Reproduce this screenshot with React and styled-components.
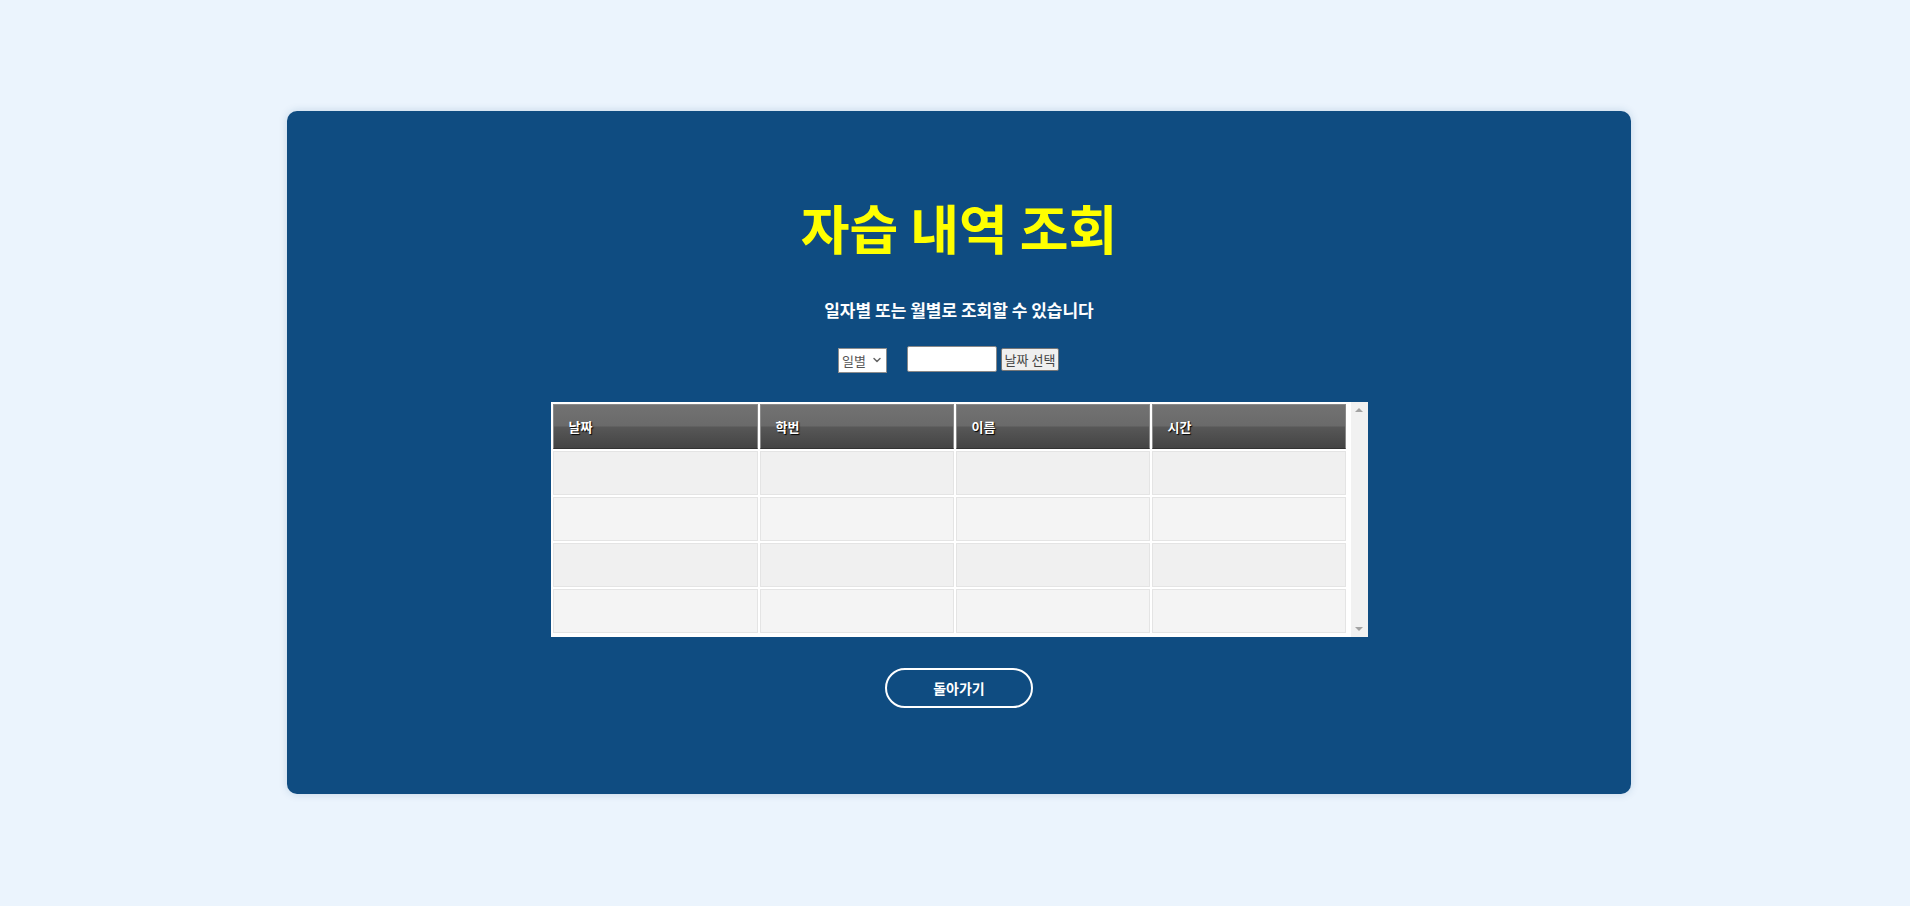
import React from "react";
import styled, { createGlobalStyle } from "styled-components";
import { ChevronDown } from "lucide-react";

const rows = [0, 1, 2, 3];
const columns = ["날짜", "학번", "이름", "시간"];

/**
 * StudyHistory page.
 */
function App() {
  return (
    <>
      <GlobalStyle />
      <Page>
        <Card>
          {/** Title */}
          <Title>자습 내역 조회</Title>
          <Subtitle>일자별 또는 월별로 조회할 수 있습니다</Subtitle>
          {/** Filter controls */}
          <Controls>
            <SelectWrap>
              <Select defaultValue="day">
                <option value="day">일별</option>
                <option value="month">월별</option>
              </Select>
              <Chevron size={12} strokeWidth={3} />
            </SelectWrap>
            <DateInput type="text" />
            <PickButton type="button">날짜 선택</PickButton>
          </Controls>
          {/** Result table */}
          <TableBox>
            <TableScroll>
              <Table>
                <thead>
                  <tr>
                    {columns.map(col => (
                      <HeadCell key={col}>{col}</HeadCell>
                    ))}
                  </tr>
                </thead>
                <tbody>
                  {rows.map(r => (
                    <tr key={r}>
                      {columns.map(col => (
                        <Cell key={col} odd={r % 2 === 0} />
                      ))}
                    </tr>
                  ))}
                </tbody>
              </Table>
            </TableScroll>
            <Scrollbar>
              <Arrow />
              <Arrow down />
            </Scrollbar>
          </TableBox>
          <BackButton type="button">돌아가기</BackButton>
        </Card>
      </Page>
    </>
  );
}

const GlobalStyle = createGlobalStyle`
  html, body {
    margin: 0;
    padding: 0;
    background: #ebf4fd;
    font-family: "Noto Sans CJK KR", "Noto Sans", sans-serif;
  }
`;
const Page = styled.div`
  display: flex;
  justify-content: center;
  padding: 111px 0 0 8px;
  min-height: 906px;
  box-sizing: border-box;
`;
const Card = styled.div`
  width: 1344px;
  height: 683px;
  box-sizing: border-box;
  background: #0f4c81;
  border-radius: 10px;
  box-shadow: 0 0 8px rgba(15, 76, 129, 0.18);
  display: flex;
  flex-direction: column;
  align-items: center;
  padding-top: 84px;
`;
const Title = styled.h1`
  margin: 0;
  color: #ffff00;
  font-size: 53px;
  line-height: 64px;
  font-weight: 700;
`;
const Subtitle = styled.p`
  margin: 39px 0 0;
  color: #ffffff;
  font-size: 17px;
  line-height: 24px;
  font-weight: 700;
`;
const Controls = styled.div`
  display: flex;
  align-items: center;
  margin: 24px 21px 0 0;
  height: 26px;
`;
const SelectWrap = styled.div`
  position: relative;
  width: 49px;
  height: 25px;
`;
const Select = styled.select`
  appearance: none;
  width: 100%;
  height: 100%;
  box-sizing: border-box;
  font-family: "Noto Sans CJK KR", sans-serif;
  font-size: 13px;
  color: #555;
  background: #fff;
  border: 1px solid #8d8d8d;
  border-radius: 0;
  padding: 0 0 0 3px;
`;
const Chevron = styled(ChevronDown)`
  position: absolute;
  right: 4px;
  top: 7px;
  color: #666;
  pointer-events: none;
`;
const DateInput = styled.input`
  width: 90px;
  height: 26px;
  box-sizing: border-box;
  margin-left: 20px;
  border: 1px solid #888;
  border-radius: 2px;
  background: #fff;
`;
const PickButton = styled.button`
  margin-left: 4px;
  width: 58px;
  height: 23px;
  padding: 0;
  font-family: "Noto Sans CJK KR", sans-serif;
  font-size: 13px;
  color: #444;
  background: #efefef;
  border: 1px solid #767676;
  border-radius: 2px;
`;
const TableBox = styled.div`
  display: flex;
  width: 817px;
  height: 235px;
  box-sizing: border-box;
  margin-top: 30px;
  background: #ffffff;
  padding: 2px 0 2px 2px;
`;
const TableScroll = styled.div`
  flex: 1;
  overflow: hidden;
`;
const Table = styled.table`
  width: 797px;
  border-collapse: separate;
  border-spacing: 2px;
  margin: -2px 0 0 -2px;
  table-layout: fixed;
`;
const HeadCell = styled.th`
  height: 45px;
  box-sizing: border-box;
  padding: 0 0 0 15px;
  text-align: left;
  color: #fff;
  font-size: 13px;
  font-weight: 700;
  text-shadow: 1px 1px 1px #000;
  border: 1px solid #8a8a8a;
  border-bottom-color: #333;
  background: linear-gradient(
    to bottom,
    #727272 0%,
    #6a6a6a 48%,
    #575757 52%,
    #444444 100%
  );
  &:first-child {
    width: 205px;
  }
`;
const Cell = styled.td`
  height: 44px;
  box-sizing: border-box;
  background: ${props => (props.odd ? "#f0f0f0" : "#f4f4f4")};
  border: 1px solid #e4e4e4;
`;
const Scrollbar = styled.div`
  width: 17px;
  margin-top: -2px;
  margin-bottom: -2px;
  background: #f1f1f1;
  display: flex;
  flex-direction: column;
  justify-content: space-between;
  align-items: center;
  padding: 6px 0;
  box-sizing: border-box;
`;
const Arrow = styled.span`
  width: 0;
  height: 0;
  border-left: 4px solid transparent;
  border-right: 4px solid transparent;
  ${props =>
    props.down
      ? "border-top: 4px solid #a3a3a3;"
      : "border-bottom: 4px solid #a3a3a3;"}
`;
const BackButton = styled.button`
  margin-top: 31px;
  width: 148px;
  height: 40px;
  border: 2px solid #ffffff;
  border-radius: 20px;
  background: transparent;
  color: #fff;
  font-family: "Noto Sans CJK KR", sans-serif;
  font-size: 14px;
  font-weight: 700;
`;

export default App;
